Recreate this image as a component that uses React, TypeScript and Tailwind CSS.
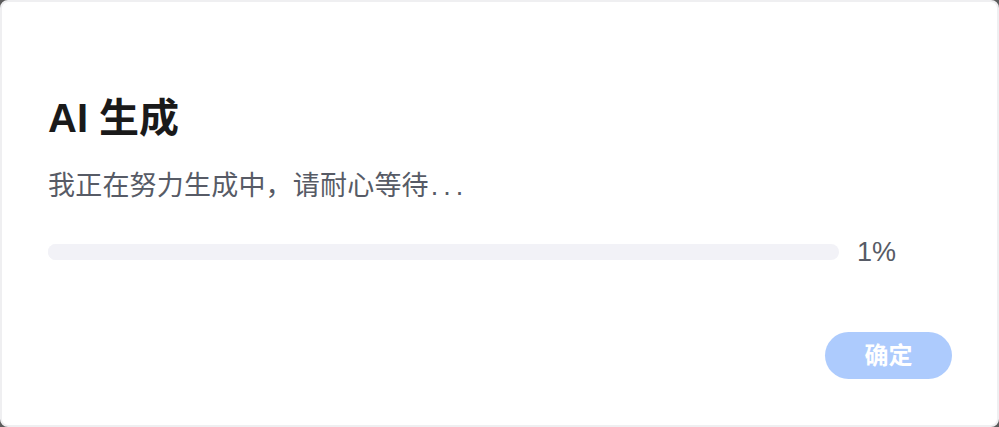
const App = () => {
  const progress = 1;

  return (
    <div className="w-[999px] h-[427px] bg-[#5c5c5c]">
      <div
        className="w-full h-full bg-white rounded-lg border-2 border-[#efeff1] flex flex-col pl-[46px] pr-[46px]"
        style={{ fontFamily: '"Liberation Sans", "Noto Sans CJK SC", sans-serif' }}
      >
        <h2 className="mt-[88px] text-[40px] leading-[56px] font-bold text-[#1a1a1a]">
          AI 生成
        </h2>
        <p className="mt-[21px] text-[27px] leading-[38px] text-[#575b66] tracking-[0.2px]">
          我正在努力生成中，请耐心等待<span className="ml-[2px] tracking-[5px]">...</span>
        </p>
        <div className="mt-[31px] flex items-center">
          <div className="w-[791px] h-4 rounded-full bg-[#f2f2f7] overflow-hidden">
            <div className="h-full bg-[#f2f2f7]" style={{ width: `${progress}%` }} />
          </div>
          <span className="ml-[18px] text-[27px] leading-8 text-[#575b66]">
            {progress}%
          </span>
        </div>
        <div className="mt-auto mb-[46px] flex justify-end">
          <button
            disabled
            className="w-[127px] h-[47px] rounded-full bg-[#adcbfd] text-white text-[24px] font-bold mr-[-1px]"
          >
            确定
          </button>
        </div>
      </div>
    </div>
  );
};

export default App;
